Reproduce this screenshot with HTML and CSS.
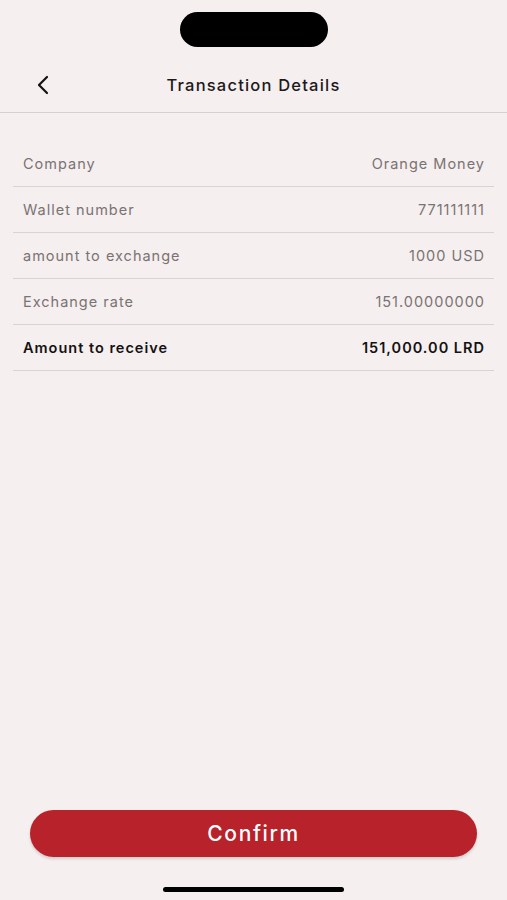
FILE: index.html
```html
<!DOCTYPE html>
<html>
<head>
<meta charset="utf-8">
<link rel="stylesheet" href="styles.css">
</head>
<body>
<div class="page">
  <div class="status"><div class="notch"></div></div>
  <header class="header">
    <button class="back" aria-label="Back">
      <svg width="16" height="20" viewBox="0 0 16 20"><path d="M12 2 L4 10 L12 18" fill="none" stroke="#111" stroke-width="2.2" stroke-linecap="round" stroke-linejoin="round"/></svg>
    </button>
    <h1 class="title">Transaction Details</h1>
    <span></span>
  </header>
  <div class="list">
    <div class="row"><span class="label">Company</span><span class="value">Orange Money</span></div>
    <div class="row"><span class="label">Wallet number</span><span class="value">771111111</span></div>
    <div class="row"><span class="label">amount to exchange</span><span class="value">1000 USD</span></div>
    <div class="row"><span class="label">Exchange rate</span><span class="value">151.00000000</span></div>
    <div class="row strong"><span class="label">Amount to receive</span><span class="value">151,000.00 LRD</span></div>
  </div>
  <div class="spacer"></div>
  <button class="confirm">Confirm</button>
  <div class="home"></div>
</div>
</body>
</html>
```
FILE: styles.css
```css
* { box-sizing: border-box; }
html, body { margin: 0; padding: 0; }
body {
  background: #f5efef;
  font-family: Inter, "Noto Sans", sans-serif;
  color: #1a1a1a;
}
.page {
  height: 900px;
  display: flex;
  flex-direction: column;
}
.status {
  height: 60px;
  padding-top: 12px;
  display: flex;
  justify-content: center;
}
.notch {
  width: 148px;
  height: 35px;
  border-radius: 18px;
  background: #000;
}
.header {
  height: 53px;
  border-bottom: 1px solid #d6d0d0;
  display: grid;
  grid-template-columns: 80px 1fr 80px;
  align-items: center;
  padding-bottom: 3px;
}
.back {
  background: none;
  border: 0;
  padding: 0 0 0 35px;
  display: flex;
  align-items: center;
  height: 30px;
}
.title {
  margin: 0;
  text-align: center;
  font-size: 16.5px;
  font-weight: 500;
  letter-spacing: 1.2px;
  color: #1c1a1a;
}
.list {
  margin: 28px 13px 0;
}
.row {
  height: 46px;
  border-bottom: 1px solid #d9d3d3;
  display: flex;
  justify-content: space-between;
  align-items: center;
  padding: 0 9px 0 10px;
  font-size: 14.5px;
  letter-spacing: 1px;
  color: #7a7373;
}
.row.strong {
  color: #141212;
  font-weight: 600;
}
.spacer { flex: 1; }
.confirm {
  margin: 0 30px;
  height: 47px;
  border: 0;
  border-radius: 24px;
  background: #b8222a;
  color: #fff;
  font-family: Inter, "Noto Sans", sans-serif;
  font-size: 21px;
  font-weight: 500;
  letter-spacing: 1.6px;
  box-shadow: 0 2px 3px rgba(0,0,0,0.15);
}
.home {
  width: 181px;
  height: 5px;
  border-radius: 3px;
  background: #000;
  margin: 30px auto 8px;
}
```
